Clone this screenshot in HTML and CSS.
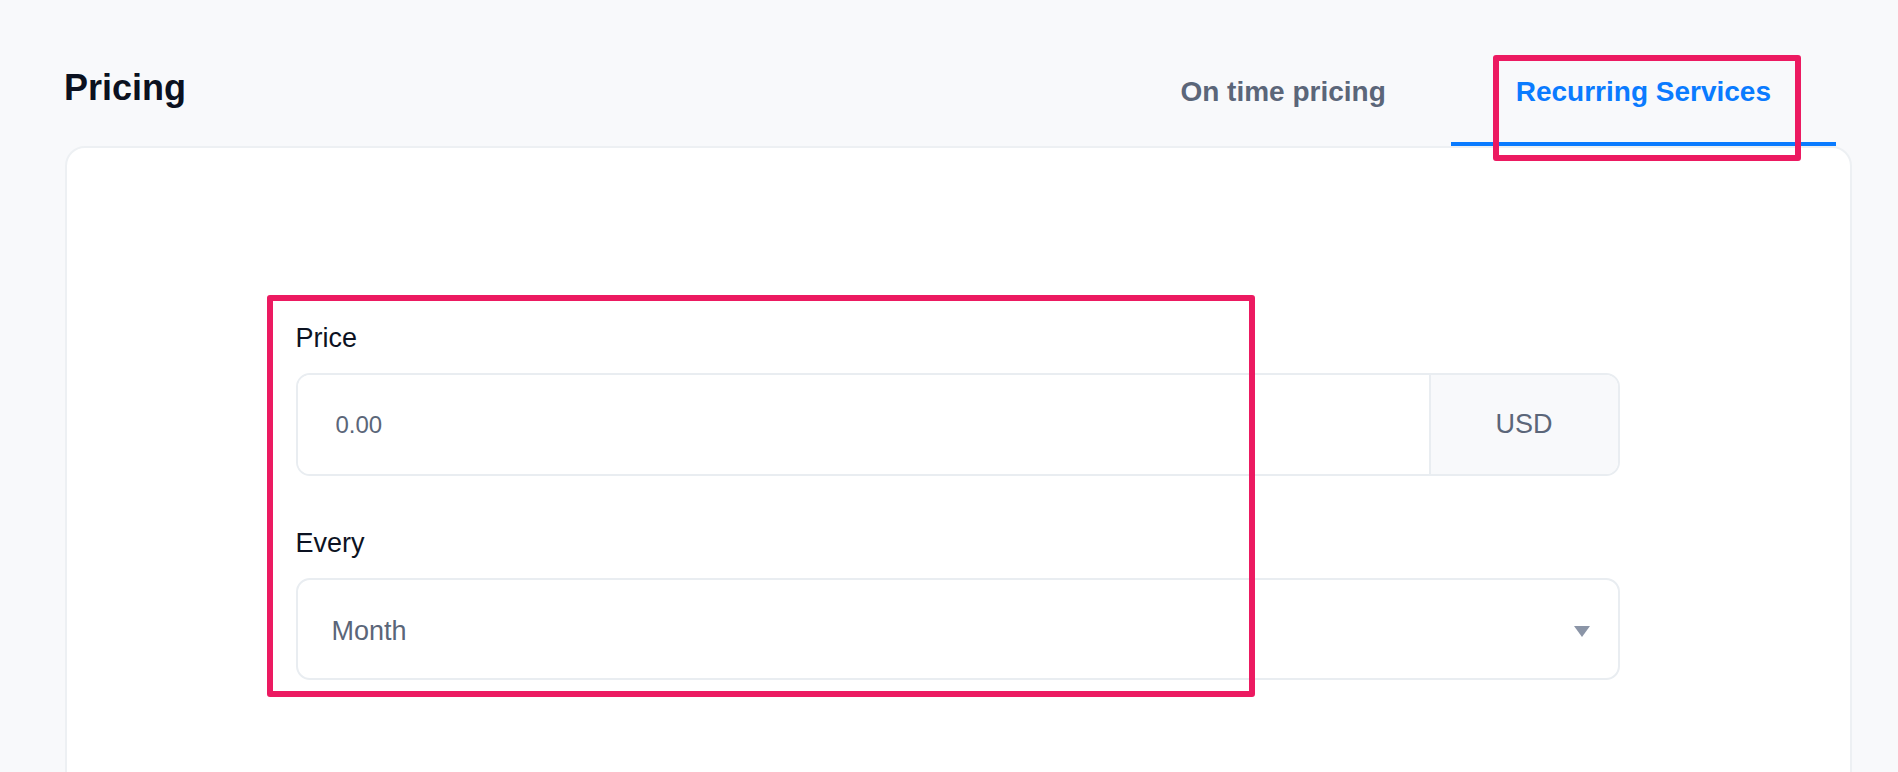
FILE: index.html
```html
<!DOCTYPE html>
<html lang="en">
<head>
<meta charset="utf-8">
<title>Pricing</title>
<link rel="stylesheet" href="styles.css">
</head>
<body>
<div class="page">
  <header class="header">
    <h1 class="title">Pricing</h1>
    <nav class="tabs">
      <div class="tab">On time pricing</div>
      <div class="tab active">Recurring Services<span class="mark mark-tab"></span></div>
    </nav>
  </header>
  <section class="card">
    <div class="form">
      <span class="mark mark-form"></span>
      <div class="field">
        <label class="label" for="price">Price</label>
        <div class="input-group">
          <input id="price" class="input" type="text" placeholder="0.00">
          <div class="addon">USD</div>
        </div>
      </div>
      <div class="field">
        <div class="label">Every</div>
        <div class="select">
          <span class="select-value">Month</span>
          <svg class="caret" width="16" height="11" viewBox="0 0 16 11"><path d="M0 0H16L8 11Z" fill="#8b95a7"/></svg>
        </div>
      </div>
    </div>
  </section>
</div>
</body>
</html>
```

FILE: styles.css
```css
* { box-sizing: border-box; }
html, body {
  margin: 0;
  height: 772px;
  overflow: hidden;
  background: #f8f9fb;
  font-family: "Liberation Sans", Arial, Helvetica, sans-serif;
}
.page {
  height: 772px;
  overflow: hidden;
  padding: 66px 46px 0 65px;
}
.header {
  display: flex;
  justify-content: space-between;
  align-items: flex-end;
  padding-right: 16px;
}
.title {
  margin: 0 0 36px -1px;
  font-size: 36px;
  line-height: 44px;
  font-weight: 700;
  color: #0b1120;
}
.tabs {
  display: flex;
}
.tab {
  position: relative;
  padding: 0 65px 34px;
  font-size: 28px;
  line-height: 32px;
  font-weight: 700;
  color: #5b6679;
  border-bottom: 4px solid transparent;
}
.tab.active {
  color: #0a7bff;
  border-bottom-color: #0a7bff;
}
.mark {
  position: absolute;
  border: 6px solid #ec1a61;
  border-radius: 3px;
  pointer-events: none;
}
.mark-tab {
  left: 42px;
  top: -21px;
  width: 308px;
  height: 106px;
}
.card {
  background: #ffffff;
  border: 2px solid #edf0f3;
  border-radius: 20px;
  height: 700px;
  padding: 174px 2px 0 0;
}
.form {
  position: relative;
  width: 1324px;
  margin: 0 auto;
}
.mark-form {
  left: -29px;
  top: -27px;
  width: 988px;
  height: 402px;
}
.field {
  margin-bottom: 51px;
}
.label {
  display: block;
  font-size: 27px;
  line-height: 32px;
  color: #0c1222;
  margin-bottom: 19px;
}
.input-group {
  display: flex;
  height: 103px;
  border: 2px solid #e9edf1;
  border-radius: 14px;
  overflow: hidden;
}
.input {
  flex: 1;
  border: none;
  outline: none;
  padding: 0 0 0 38px;
  font-family: inherit;
  font-size: 24px;
  color: #5b6679;
  background: #ffffff;
}
.input::placeholder {
  color: #5b6679;
  opacity: 1;
}
.addon {
  width: 189px;
  border-left: 2px solid #e9edf1;
  background: #f8f9fb;
  display: flex;
  align-items: center;
  justify-content: center;
  font-size: 27px;
  color: #5b6679;
}
.select {
  display: flex;
  align-items: center;
  justify-content: space-between;
  height: 102px;
  border: 2px solid #e9edf1;
  border-radius: 14px;
  padding: 5px 28px 0 34px;
  font-size: 27px;
  color: #5b6679;
}
.caret {
  display: block;
}
```
